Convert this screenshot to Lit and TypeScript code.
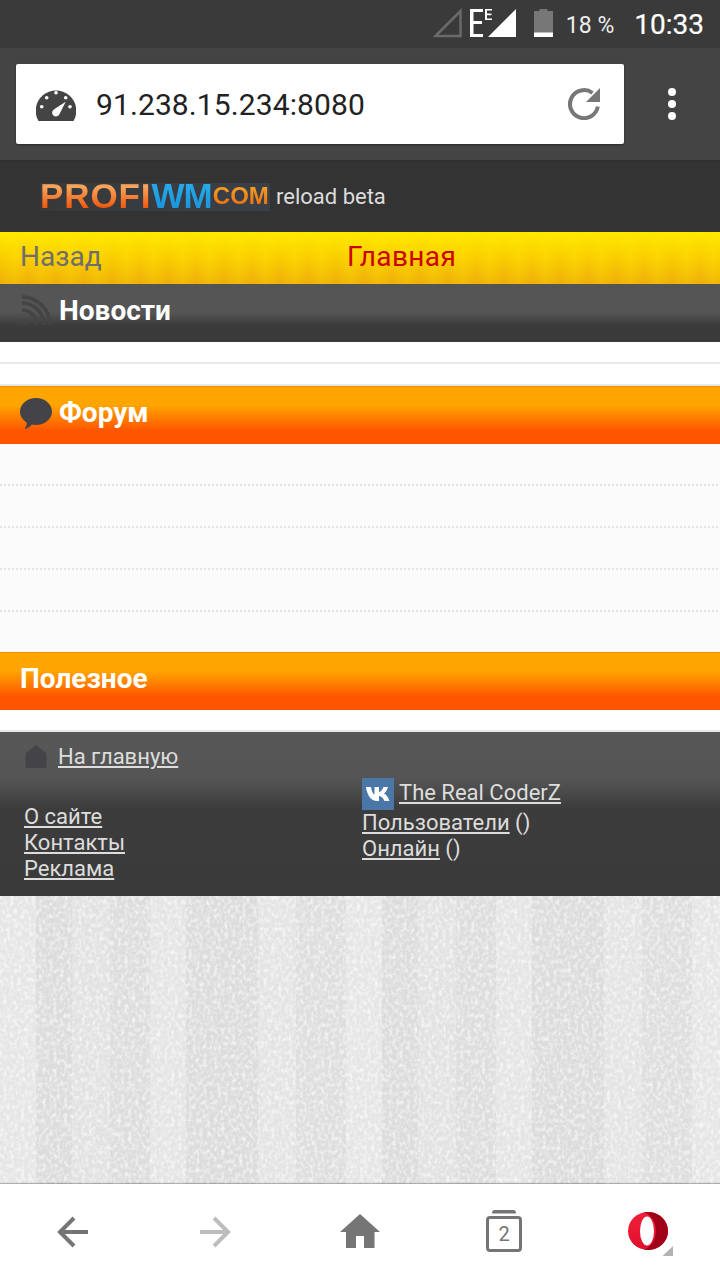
import { LitElement, html, css, svg } from "lit";
import { customElement } from "lit/decorators.js";

@customElement("app-root")
export class AppRoot extends LitElement {
  static styles = css`
    :host { display: block; width: 720px; height: 1280px; overflow: hidden; font-family: Roboto, "Noto Sans", sans-serif; background: #fff; }
    .page { display: flex; flex-direction: column; height: 1280px; }
    .status { height: 48px; background: #3a3a3a; display: flex; align-items: center; justify-content: flex-end; padding: 0 16px 0 0; color: #fff; flex: none; box-sizing: border-box; }
    .status svg { display: block; margin-top: -2px; }
    .pct { font-size: 23px; margin: 2px 20px 0 12px; color: #eee; }
    .clock { font-size: 28px; font-weight: 400; margin-top: 1px; -webkit-text-stroke: .2px #fff; }
    .s-weak { margin-right: 8px; }
    .s-e { margin-right: -4px; }
    .s-sig { margin-right: 17px; }
    .toolbar { height: 112px; background: #444; flex: none; display: flex; align-items: center; padding: 0 0 0 16px; box-sizing: border-box; }
    .url { width: 608px; height: 80px; background: #fff; border-radius: 2px; box-shadow: 0 1px 2px rgba(0,0,0,.4); display: flex; align-items: center; padding: 0 24px 0 20px; box-sizing: border-box; }
    .url-text { font-size: 30px; color: #222; margin-left: 20px; flex: 1; letter-spacing: .1px; }
    .dots { flex: 1; display: flex; justify-content: center; }
    .brand { height: 72px; background: #333; flex: none; display: flex; align-items: center; padding-left: 40px; box-sizing: border-box; border-top: 2px solid #303030; }
    .logo { width: 230px; height: 28px; background: linear-gradient(90deg, #383838, #383c40 45%, #3a4048); display: flex; align-items: flex-start; filter: blur(.7px); font-family: "Liberation Sans", sans-serif; font-weight: 700; margin-top: -1px; }
    .logo span { -webkit-background-clip: text; background-clip: text; color: transparent; display: block; }
    .lg-a { font-size: 35px; line-height: 36px; height: 36px; margin-top: -5px; letter-spacing: .9px; background-image: linear-gradient(#2a2a2a 0, #f8a860 22%, #f25508 85%); }
    .lg-b { font-size: 35px; line-height: 36px; height: 36px; margin-top: -5px; letter-spacing: -.9px; background-image: linear-gradient(#2ab0f0, #1890d8); }
    .lg-c { font-size: 24px; line-height: 25px; height: 25px; margin-left: 1px; background-image: linear-gradient(#f8a828, #ee6a10); }
    .beta { font-size: 22px; color: #ddd; margin-left: 6px; margin-top: -1px; }
    .nav { height: 52px; flex: none; background: repeating-linear-gradient(90deg, rgba(255,240,0,0) 0, rgba(255,240,0,.2) 14px, rgba(255,240,0,0) 28px), linear-gradient(#ffe800, #fbd000 45%, #eeae0c); display: grid; grid-template-columns: 327px 1fr; align-items: center; padding-left: 20px; box-sizing: border-box; font-size: 28px; }
    .nav span { margin-top: -3px; }
    .nav .back { color: #6e6e6e; }
    .nav .home { color: #cc0000; letter-spacing: .4px; }
    .bar { height: 58px; flex: none; display: flex; align-items: center; padding-left: 20px; box-sizing: border-box; color: #fff; font-weight: 700; font-size: 28px; gap: 7px; }
    .bar svg { flex: none; margin-top: -4px; }
    .bar span { margin-top: -6px; }
    .dark { background: linear-gradient(#555 0, #555 28px, #4c4c4c 33px, #3b3b3b 42px, #3a3a3a 100%); }
    .orange { background: linear-gradient(#ffa500 0, #ffa500 18px, #ff7a00 32px, #ff5500 44px, #ff5500 100%); border-top: 1px solid #f09000; }
    .blank { height: 20px; flex: none; background: #fff; }
    .rule { height: 2px; flex: none; background: #e8e8e8; }
    .rows { flex: none; background: #fbfbfb; }
    .row { height: 42px; background: repeating-linear-gradient(90deg, #e4e4e4 0 2px, transparent 2px 4px) left bottom / 100% 2px no-repeat; }
    .row:last-child { height: 40px; background: none; }
    .foot { height: 164px; flex: none; box-sizing: border-box; background: linear-gradient(#575757 0, #555 46px, #494949 62px, #3c3c3c 76px, #3a3a3a 100%); display: grid; grid-template-columns: 338px 1fr; padding-left: 24px; color: #ddd; font-size: 22px; line-height: 26px; }
    .foot a { color: #ddd; text-decoration: underline; text-decoration-thickness: 2px; text-underline-offset: 2px; }
    .col { display: flex; flex-direction: column; }
    .col.l { padding-top: 12px; }
    .col.r { padding-top: 46px; }
    .homerow { display: flex; align-items: center; gap: 8px; height: 26px; margin-bottom: 34px; }
    .vkrow { display: flex; align-items: center; gap: 5px; height: 32px; }
    .vkrow a { margin-top: -3px; }
    .vk { width: 32px; height: 32px; background: #4a76a8; display: flex; align-items: center; justify-content: center; flex: none; }
    .wall { flex: 1; position: relative; overflow: hidden; background: repeating-linear-gradient(90deg, #e6e6e6 0 36px, #dcdcdc 36px 72px, #e2e2e2 72px 110px, #dddddd 110px 150px, #e5e5e5 150px 186px, #dcdcdc 186px 258px, #e4e4e4 258px 296px, #dedede 296px 346px); }
    .wall svg { position: absolute; inset: 0; width: 100%; height: 100%; }
    .tabs { height: 96px; flex: none; background: #fff; box-shadow: 0 -1px 1px rgba(0,0,0,.25); display: grid; grid-template-columns: repeat(5, 1fr); align-items: center; justify-items: center; position: relative; }
    .count { position: relative; width: 36px; height: 42px; display: flex; align-items: center; justify-content: center; font-size: 20px; color: #757575; margin-top: -2px; }
    .count svg { position: absolute; inset: 0; }
    .count span { position: relative; margin-top: 5px; }
    .ic-home { margin-top: -2px; }
    .ic-opera { margin: 4px 0 0 6px; }
  `;

  private rss() {
    return html`<svg width="32" height="32" viewBox="0 0 32 32" fill="none" stroke="#444" stroke-width="3.500">
      <circle cx="5" cy="27" r="3" fill="#444" stroke="none"/>
      <path d="M2 15a15 15 0 0 1 15 15M2 8a22 22 0 0 1 22 22M2 2a28 28 0 0 1 28 28"/>
    </svg>`;
  }

  private texture() {
    return svg`<svg xmlns="http://www.w3.org/2000/svg">
      <filter id="nw" x="0" y="0" width="100%" height="100%">
        <feTurbulence type="fractalNoise" baseFrequency="0.28 0.22" numOctaves="3" seed="4"/>
        <feColorMatrix type="matrix" values="0 0 0 0 1  0 0 0 0 1  0 0 0 0 1  2.4 0 0 0 -1"/>
      </filter>
      <filter id="nd" x="0" y="0" width="100%" height="100%">
        <feTurbulence type="fractalNoise" baseFrequency="0.12 0.05" numOctaves="2" seed="9"/>
        <feColorMatrix type="matrix" values="0 0 0 0 .72  0 0 0 0 .72  0 0 0 0 .72  0 1.600 0 0 -0.72"/>
      </filter>
      <rect width="100%" height="100%" filter="url(#nd)" opacity=".22"/>
      <rect width="100%" height="100%" filter="url(#nw)" opacity=".7"/>
    </svg>`;
  }

  render() {
    return html`<div class="page">
      <div class="status">
        <svg class="s-weak" width="29" height="30" viewBox="0 0 29 30"><path d="M2.500 28 27.500 3v25z" fill="none" stroke="#6a6a6a" stroke-width="2.500"/></svg>
        <svg class="s-e" width="22" height="30" viewBox="0 0 22 30"><path d="M0 1h13v3H3.500v9H12v3H3.500v10H13v3H0zM15 1h7v1.600h-5v3h4.500v1.600H17v3.200h5V12h-7z" fill="#fff"/></svg>
        <svg class="s-sig" width="29" height="30" viewBox="0 0 29 30"><path d="M0 29 28 1v28z" fill="#fff"/></svg>
        <svg width="20" height="30" viewBox="0 0 20 30"><path d="M5.500 1h8v2H19v26H0V3h5.500z" fill="#777"/><path d="M0 24.500h19V29H0z" fill="#fff"/></svg>
        <span class="pct">18 %</span>
        <span class="clock">10:33</span>
      </div>
      <div class="toolbar">
        <div class="url">
          <svg width="40" height="34" viewBox="0 0 40 34"><path d="M2.500 34A20.300 20.300 0 1 1 37.500 34z" fill="#444"/><g fill="#fff"><circle cx="5.700" cy="19.700" r="1.800"/><circle cx="10.700" cy="10.700" r="1.800"/><circle cx="20" cy="5.700" r="1.800"/><circle cx="29.700" cy="10.700" r="1.800"/><circle cx="34" cy="19.700" r="1.800"/><path d="M29.700 14.700 23.500 27a3.800 3.800 0 1 1-5.300-4.700z"/></g></svg>
          <span class="url-text">91.238.15.234:8080</span>
          <svg width="32" height="32" viewBox="0 0 32 32" fill="none"><path d="M29.800 18.500A14 14 0 1 1 24.500 5" stroke="#777" stroke-width="4"/><path d="M32 0v14H18z" fill="#777"/></svg>
        </div>
        <div class="dots"><svg width="12" height="32" viewBox="0 0 12 32" fill="#fff"><circle cx="6" cy="4" r="4"/><circle cx="6" cy="16" r="4"/><circle cx="6" cy="28" r="4"/></svg></div>
      </div>
      <div class="brand">
        <div class="logo"><span class="lg-a">PROFI</span><span class="lg-b">WM</span><span class="lg-c">COM</span></div>
        <span class="beta">reload beta</span>
      </div>
      <div class="nav"><span class="back">Назад</span><span class="home">Главная</span></div>
      <div class="bar dark">${this.rss()}<span>Новости</span></div>
      <div class="blank"></div><div class="rule"></div><div class="blank"></div><div class="rule"></div>
      <div class="bar orange">
        <svg width="32" height="32" viewBox="0 0 32 32"><path d="M16 0c8.800 0 16 6 16 13.500S24.800 27 16 27c-1.500 0-3 0-4.300-.4C10 29 7.500 31 4.500 31c1.500-2 2.500-4 2.200-6.500C2.600 22 0 18 0 13.500 0 6 7.200 0 16 0z" fill="#444448"/></svg>
        <span>Форум</span>
      </div>
      <div class="rows"><div class="row"></div><div class="row"></div><div class="row"></div><div class="row"></div><div class="row"></div></div>
      <div class="bar orange"><span>Полезное</span></div>
      <div class="blank"></div><div class="rule"></div>
      <div class="foot">
        <div class="col l">
          <div class="homerow">
            <svg width="26" height="26" viewBox="0 0 26 26"><path d="M12 1 22.500 9.500V24H1.500V9.500z" fill="#444448"/></svg>
            <a>На главную</a>
          </div>
          <a>О сайте</a><a>Контакты</a><a>Реклама</a>
        </div>
        <div class="col r">
          <div class="vkrow">
            <div class="vk"><svg width="28" height="16" viewBox="0 0 28 16"><path d="M0 1h5c.5 4 2 7 3.500 7.500V1h4.500v5c2 0 3.500-3 4.500-5H22c-.7 3-2.500 5.300-4 6.500 2 1 4.500 4 5.500 7.500h-5c-1-2.500-3-5-5.500-5v5h-2C5 15 1 9 0 1z" fill="#fff" transform="translate(2 0)"/></svg></div>
            <a>The Real CoderZ</a>
          </div>
          <div><a>Пользователи</a> ()</div>
          <div><a>Онлайн</a> ()</div>
        </div>
      </div>
      <div class="wall">${this.texture()}</div>
      <div class="tabs">
        <svg width="32" height="32" viewBox="0 0 32 32" fill="none" stroke="#757575" stroke-width="4"><path d="M32 16H4M18 2 4 16l14 14"/></svg>
        <svg width="32" height="32" viewBox="0 0 32 32" fill="none" stroke="#bdbdbd" stroke-width="4"><path d="M0 16h28M14 2l14 14-14 14"/></svg>
        <svg class="ic-home" width="40" height="34" viewBox="0 0 40 34"><path d="M20 0 40 18h-5.500v16H24V22h-8v12H6V18H0z" fill="#757575"/></svg>
        <div class="count">
          <svg width="36" height="42" viewBox="0 0 36 42" fill="none"><path d="M6 3.500C6 1 7 0 8.500 0h19C29 0 30 1 30 3.500z" fill="#757575"/><rect x="1.500" y="7.500" width="33" height="33" rx="2.500" stroke="#757575" stroke-width="3"/></svg>
          <span>2</span>
        </div>
        <svg class="ic-opera" width="46" height="44" viewBox="0 0 46 44">
          <defs><linearGradient id="og" x1="0" y1="0" x2="0" y2="1"><stop offset="0" stop-color="#f0203a"/><stop offset="1" stop-color="#e0102c"/></linearGradient></defs>
          <ellipse cx="20" cy="19" rx="20" ry="19" fill="url(#og)"/>
          <path d="M20 0c11 0 20 8.500 20 19s-9 19-20 19c-1.500 0-3-.2-4.500-.5C22 36 28 29 28 19S22 2 15.500.5C17 .2 18.500 0 20 0z" fill="#a00018"/>
          <ellipse cx="19" cy="19" rx="7" ry="14.500" fill="#fff"/>
          <path d="M45 34v10H34.500z" fill="#b3b3b3"/>
        </svg>
      </div>
    </div>`;
  }
}
